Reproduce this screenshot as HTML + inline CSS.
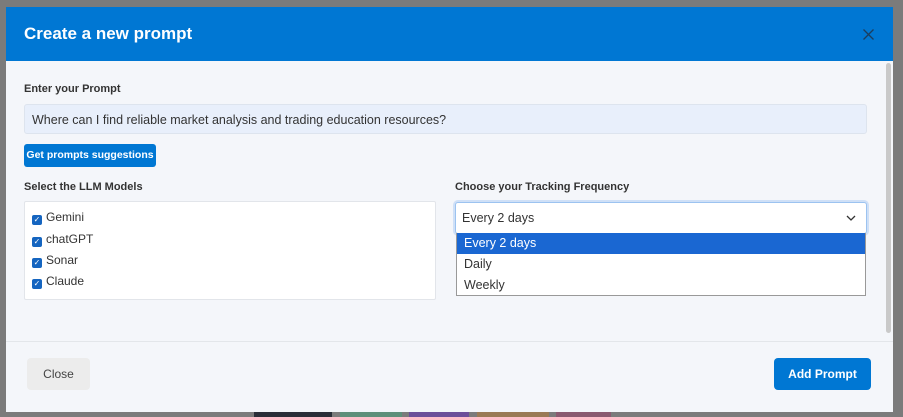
<!DOCTYPE html>
<html><head><style>
body{margin:0;width:903px;height:417px;background:#7b7b7b;font-family:"Liberation Sans",sans-serif;position:relative;overflow:hidden}
.m{position:absolute;left:6px;top:7px;width:887px;height:405px;background:#f4f6fa}
.h{height:54px;background:#0077d3;color:#fff;font-weight:bold;font-size:17px;line-height:54px;padding-left:18px;position:relative}
.lbl{position:absolute;font-size:11px;font-weight:bold;color:#333}
.inp{position:absolute;left:18px;top:97px;width:843px;height:30px;background:#e8effb;border:1px solid #dde4ee;border-radius:3px;font-size:12.5px;color:#333;line-height:30px;padding-left:7px;box-sizing:border-box}
.btn{position:absolute;left:18px;top:137px;width:132px;height:23px;background:#0077d3;border-radius:3px;color:#fff;font-size:10.5px;font-weight:bold;line-height:23px;text-align:center}
.box{position:absolute;left:18px;top:194px;width:412px;height:99px;background:#fff;border:1px solid #e2e5ea;border-radius:2px;box-sizing:border-box}
.cb{position:absolute;left:7px;font-size:12px;color:#333;line-height:14px}
.cb i{display:inline-block;width:10px;height:10px;background:#1565c0;border-radius:2px;margin-right:4px;vertical-align:-1px;color:#fff;font-size:8px;font-style:normal;line-height:10px;text-align:center}
.sel{position:absolute;left:449px;top:195px;width:412px;height:32px;background:#fff;border:1px solid #9cc3f0;box-shadow:0 0 0 2px #cfe0f7;border-radius:3px;box-sizing:border-box;font-size:12.5px;color:#333;line-height:30px;padding-left:6px}
.dd{position:absolute;left:450px;top:226px;width:410px;height:63px;background:#fff;border:1px solid #999;border-top:none;box-sizing:border-box;font-size:12.5px;color:#333}
.dd div{height:21px;line-height:21px;padding-left:7px}
.sb{position:absolute;left:880px;top:56px;width:5px;height:270px;background:#c9c9c9;border-radius:3px}
.ft{position:absolute;left:0;top:334px;width:887px;border-top:1px solid #e3e6ea}
.cl{position:absolute;left:21px;top:351px;width:63px;height:32px;background:#ececec;border-radius:4px;font-size:12px;color:#444;line-height:32px;text-align:center}
.ad{position:absolute;left:768px;top:351px;width:97px;height:32px;background:#0077d3;border-radius:4px;font-size:12px;font-weight:bold;color:#fff;line-height:32px;text-align:center}
</style></head><body>
<div style="position:absolute;left:254px;top:412px;width:78px;height:5px;background:#2a2e38"></div>
<div style="position:absolute;left:340px;top:412px;width:62px;height:5px;background:#5e8f7a"></div>
<div style="position:absolute;left:409px;top:412px;width:60px;height:5px;background:#6c4f9a"></div>
<div style="position:absolute;left:477px;top:412px;width:72px;height:5px;background:#9a7a55"></div>
<div style="position:absolute;left:556px;top:412px;width:55px;height:5px;background:#8a5a70"></div>
<div class="m">
<div class="h">Create a new prompt<svg style="position:absolute;left:857px;top:22px" width="11" height="11"><path d="M0.5 0.5L10.5 10.5M10.5 0.5L0.5 10.5" stroke="#1c3d5e" stroke-width="1.3"/></svg></div>
<div class="lbl" style="left:18px;top:76px">Enter your Prompt</div>
<div class="inp">Where can I find reliable market analysis and trading education resources?</div>
<div class="btn">Get prompts suggestions</div>
<div class="lbl" style="left:18px;top:174px">Select the LLM Models</div>
<div class="lbl" style="left:449px;top:174px">Choose your Tracking Frequency</div>
<div class="box">
<div class="cb" style="top:8px"><i>✓</i>Gemini</div>
<div class="cb" style="top:30px"><i>✓</i>chatGPT</div>
<div class="cb" style="top:51px"><i>✓</i>Sonar</div>
<div class="cb" style="top:72px"><i>✓</i>Claude</div>
</div>
<div class="sel">Every 2 days<svg style="position:absolute;right:10px;top:12px" width="10" height="6"><path d="M1 1L5 5L9 1" stroke="#333" stroke-width="1.3" fill="none"/></svg></div>
<div class="dd"><div style="background:#1a67d2;color:#fff">Every 2 days</div><div>Daily</div><div>Weekly</div></div>
<div class="sb"></div>
<div class="ft"></div>
<div class="cl">Close</div>
<div class="ad">Add Prompt</div>
</div>
</body></html>
